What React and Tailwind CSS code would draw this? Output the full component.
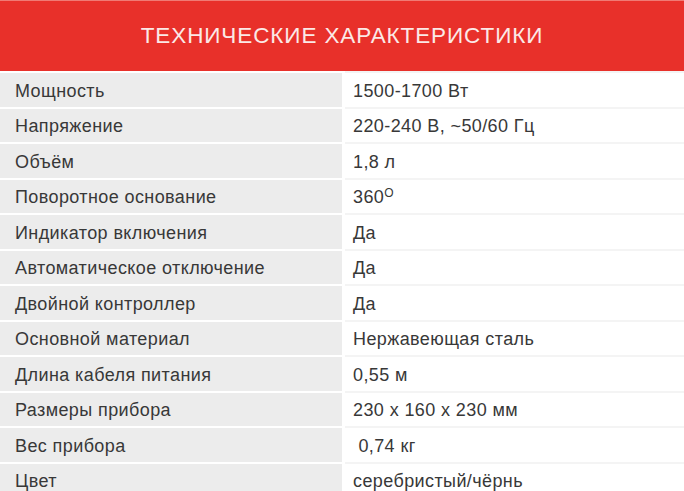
import React from 'react';

const rows = [
  ['Мощность', '1500-1700 Вт'],
  ['Напряжение', '220-240 В, ~50/60 Гц'],
  ['Объём', '1,8 л'],
  ['Поворотное основание', '360', true],
  ['Индикатор включения', 'Да'],
  ['Автоматическое отключение', 'Да'],
  ['Двойной контроллер', 'Да'],
  ['Основной материал', 'Нержавеющая сталь'],
  ['Длина кабеля питания', '0,55 м'],
  ['Размеры прибора', '230 х 160 х 230 мм'],
  ['Вес прибора', '\u00a00,74 кг'],
  ['Цвет', 'серебристый/чёрнь'],
];

export default function App() {
  return (
    <div className="w-[684px] h-[491px] overflow-hidden bg-white font-['Liberation_Sans',Arial,sans-serif]">
      {/* Header */}
      <div className="h-[71px] bg-[#e8302a] border-t border-[#f07a74] flex items-center justify-center">
        <h1 className="text-[22.5px] text-[#fbe9e7] tracking-[0.9px] leading-none">
          ТЕХНИЧЕСКИЕ ХАРАКТЕРИСТИКИ
        </h1>
      </div>

      {/* Spec table */}
      <div className="flex flex-col">
        {rows.map(([label, value, degree]) => (
          <div key={label} className="flex h-[35.5px]">
            <div className="w-[342px] border-t-2 border-white bg-[#ececec] flex items-center pl-[15px] pt-[3px] text-[18px] tracking-[0.4px] text-[#383838]">
              {label}
            </div>
            <div className="flex-1 ml-[3px] border-t-2 border-[#f4f4f4] bg-white flex items-center pl-[8px] pt-[3px] text-[18px] tracking-[0.4px] text-[#383838]">
              {value}
              {degree && <sup className="text-[12px] -top-[5px] relative">O</sup>}
            </div>
          </div>
        ))}
      </div>
    </div>
  );
}
